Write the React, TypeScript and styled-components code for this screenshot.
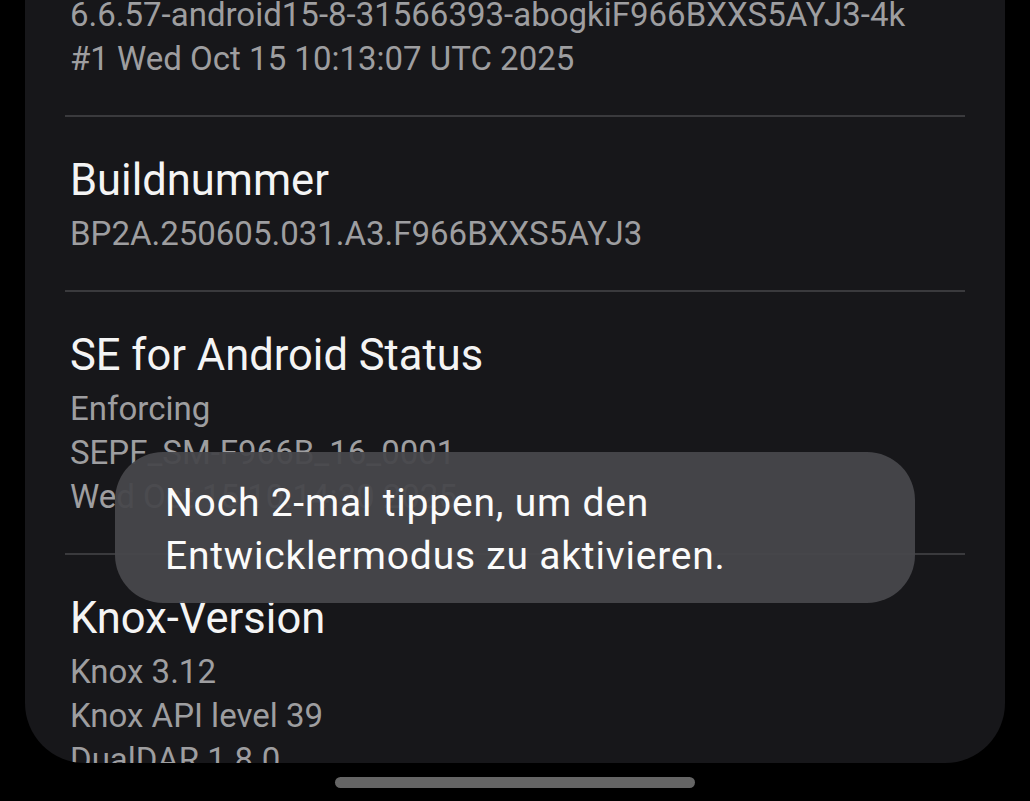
import styled, { createGlobalStyle } from "styled-components";

const GlobalStyle = createGlobalStyle`
    html, body {
        margin: 0;
        height: 100%;
        background: #000;
        overflow: hidden;
    }
    #root {
        height: 100%;
    }
`;

const Screen = styled.div`
    position: relative;
    height: 100%;
    display: flex;
    flex-direction: column;
    font-family: Roboto, "Noto Sans", sans-serif;
`;

const Panel = styled.div`
    margin: 0 25px;
    height: 763px;
    background: #17171a;
    border-radius: 0 0 60px 60px;
    overflow: hidden;
    padding: 0 40px;
    box-sizing: border-box;
`;

// scrolled list, first entry is partly above the top edge
const List = styled.div`
    margin-top: -102px;
    display: flex;
    flex-direction: column;
`;

const Section = styled.div`
    padding: 36px 5px 34px;
    display: flex;
    flex-direction: column;
`;

const Divider = styled.div`
    height: 2px;
    background: #3a3a3d;
`;

const Title = styled.div`
    color: #f4f4f4;
    font-size: 43.5px;
    line-height: 56px;
    margin-bottom: 3px;
    white-space: nowrap;
`;

const Line = styled.div`
    color: #9e9ea0;
    font-size: 33px;
    line-height: 44px;
    white-space: nowrap;
`;

const HomeBar = styled.div`
    margin: 14px auto 0;
    width: 360px;
    height: 11px;
    border-radius: 6px;
    background: #656565;
`;

const Toast = styled.div`
    position: absolute;
    left: 115px;
    top: 452px;
    width: 800px;
    box-sizing: border-box;
    padding: 25px 50px 20px;
    border-radius: 48px;
    background: rgba(71, 71, 75, 0.95);
    color: #fbfbfb;
    font-size: 39px;
    line-height: 53px;
    letter-spacing: 0.8px;
`;

const sections = [
    {
        title: "Kernel-Version",
        lines: [
            "6.6.57-android15-8-31566393-abogkiF966BXXS5AYJ3-4k",
            "#1 Wed Oct 15 10:13:07 UTC 2025",
        ],
    },
    { title: "Buildnummer", lines: ["BP2A.250605.031.A3.F966BXXS5AYJ3"] },
    {
        title: "SE for Android Status",
        lines: ["Enforcing", "SEPF_SM-F966B_16_0001", "Wed Oct 15 10:14:30 2025"],
    },
    {
        title: "Knox-Version",
        lines: ["Knox 3.12", "Knox API level 39", "DualDAR 1.8.0", "HDM 2.0 - F"],
    },
];

export default function App() {
    return (
        <Screen>
            <GlobalStyle />
            <Panel>
                <List>
                    {sections.map((s, i) => (
                        <div key={s.title}>
                            {i > 0 ? <Divider /> : null}
                            <Section>
                                <Title>{s.title}</Title>
                                {s.lines.map((l) => (
                                    <Line key={l}>{l}</Line>
                                ))}
                            </Section>
                        </div>
                    ))}
                </List>
            </Panel>
            <HomeBar />
            <Toast>
                Noch 2-mal tippen, um den
                <br />
                Entwicklermodus zu aktivieren.
            </Toast>
        </Screen>
    );
}
